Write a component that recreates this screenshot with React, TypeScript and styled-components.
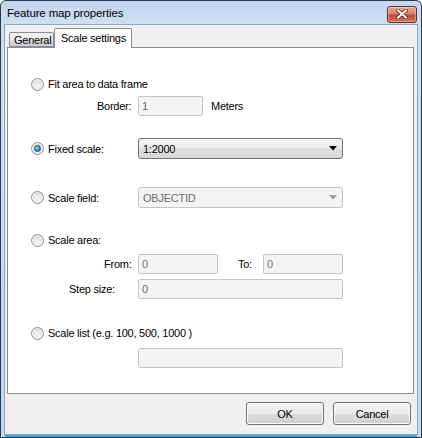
import React from 'react';
import styled, { createGlobalStyle } from 'styled-components';

const GlobalStyle = createGlobalStyle`
  html, body {
    margin: 0;
    padding: 0;
    background: #ffffff;
  }
  body {
    font-family: "Liberation Sans", Arial, sans-serif;
    font-size: 11px;
    letter-spacing: -0.25px;
    color: #000;
  }
`;

const Window = styled.div`
  width: 420px;
  height: 436px;
  border: 1px solid #2a3a4c;
  border-radius: 6px 6px 0 0;
  background: linear-gradient(180deg, #c3d6ee 0px, #cfdff2 24px, #c6d9ef 100%);
  display: flex;
  flex-direction: column;
  overflow: hidden;
`;

const TitleBar = styled.div`
  height: 23px;
  display: flex;
  align-items: center;
  justify-content: space-between;
  padding: 0 4px 0 6px;
`;

const Title = styled.span`
  font-size: 11.5px;
  letter-spacing: -0.15px;
  color: #000;
  padding-top: 1px;
`;

const CloseButton = styled.div`
  width: 28px;
  height: 15px;
  border: 1px solid #6b2a22;
  border-radius: 3px;
  background: linear-gradient(180deg, #e9a99c 0%, #d9826f 45%, #c24b33 55%, #d0735c 100%);
  box-shadow: inset 0 0 0 1px rgba(255, 255, 255, 0.35);
  display: flex;
  align-items: center;
  justify-content: center;
  margin-top: 3px;
`;

const Client = styled.div`
  flex: 1;
  margin: 0 3px 2px 3px;
  border: 1px solid #8ea4bf;
  background: #f0f0f0;
  display: flex;
  flex-direction: column;
  padding: 3px 3px 9px 2px;
  box-shadow: 0 3px 0 -1px #38acd6;
`;

const TabControl = styled.div`
  display: flex;
  flex-direction: column;
`;

const TabStrip = styled.div`
  height: 19px;
  display: flex;
  align-items: flex-end;
  position: relative;
  z-index: 1;
`;

const Tab = styled.div<{ $active?: boolean; $width: number }>`
  box-sizing: border-box;
  width: ${p => p.$width}px;
  height: ${p => (p.$active ? 20 : 15)}px;
  margin-left: ${p => (p.$active ? 0 : 2)}px;
  margin-bottom: ${p => (p.$active ? -1 : 0)}px;
  border: 1px solid #898c95;
  border-bottom: ${p => (p.$active ? 'none' : '1px solid #898c95')};
  border-radius: 2px 2px 0 0;
  background: ${p =>
    p.$active
      ? '#ffffff'
      : 'linear-gradient(180deg, #f2f2f2 0%, #ebebeb 50%, #dddddd 51%, #cfcfcf 100%)'};
  display: flex;
  align-items: ${p => (p.$active ? 'flex-start' : 'center')};
  padding: ${p => (p.$active ? '3px 0 0 6px' : '1px 0 0 4px')};
  white-space: nowrap;
  color: #000;
`;

const Panel = styled.div`
  box-sizing: border-box;
  height: 347px;
  border: 1px solid #898c95;
  background: #ffffff;
  display: flex;
  flex-direction: column;
`;

const Row = styled.div<{ $top: number; $h?: number }>`
  display: flex;
  align-items: center;
  height: ${p => p.$h ?? 20}px;
  margin-top: ${p => p.$top}px;
  padding-left: 23px;
`;

const OptionLabel = styled.label<{ $width?: number }>`
  display: flex;
  align-items: center;
  gap: 4px;
  width: ${p => (p.$width ? `${p.$width}px` : 'auto')};
  flex-shrink: 0;
  white-space: nowrap;
`;

const Radio = styled.span<{ $checked?: boolean }>`
  box-sizing: border-box;
  width: 13px;
  height: 13px;
  border-radius: 50%;
  border: 1px solid #8e8f8f;
  background: radial-gradient(circle at 50% 65%, #f8f8f8 0%, #e6e6e6 45%, #cfcfcf 100%);
  box-shadow: inset 0 0 0 1px #f4f4f4;
  display: flex;
  align-items: center;
  justify-content: center;
  flex-shrink: 0;

  &::after {
    content: '';
    display: ${p => (p.$checked ? 'block' : 'none')};
    width: 5px;
    height: 5px;
    border-radius: 50%;
    border: 1px solid #1c4f7c;
    background: radial-gradient(circle at 40% 35%, #9fe0ff 0%, #2e8fd0 55%, #0c4a82 100%);
  }
`;

const FieldLabel = styled.span<{ $indent: number; $width: number }>`
  box-sizing: border-box;
  width: ${p => p.$width}px;
  padding-left: ${p => p.$indent}px;
  flex-shrink: 0;
  white-space: nowrap;
`;

const TextBox = styled.div<{ $width: number }>`
  box-sizing: border-box;
  width: ${p => p.$width}px;
  height: 20px;
  border: 1px solid #c2c5c9;
  border-radius: 2px;
  background: #f4f4f4;
  color: #6d6d6d;
  display: flex;
  align-items: center;
  padding-left: 3px;
  flex-shrink: 0;
`;

const Unit = styled.span`
  margin-left: 8px;
`;

const Combo = styled.div<{ $disabled?: boolean }>`
  box-sizing: border-box;
  width: 205px;
  height: 21px;
  border: 1px solid ${p => (p.$disabled ? '#c2c5c9' : '#707070')};
  border-radius: 3px;
  background: ${p =>
    p.$disabled
      ? '#f4f4f4'
      : 'linear-gradient(180deg, #f4f4f4 0%, #ececec 45%, #dedede 55%, #d7d7d7 100%)'};
  color: ${p => (p.$disabled ? '#6d6d6d' : '#000')};
  display: flex;
  align-items: center;
  justify-content: space-between;
  padding: 0 5px 0 4px;
  flex-shrink: 0;
`;

const ButtonRow = styled.div`
  display: flex;
  justify-content: flex-end;
  gap: 9px;
  margin-top: 8px;
  padding-right: 3px;
`;

const Button = styled.button`
  box-sizing: border-box;
  width: 78px;
  height: 23px;
  border: 1px solid #707070;
  border-radius: 3px;
  background: linear-gradient(180deg, #f2f2f2 0%, #ebebeb 50%, #dddddd 51%, #cfcfcf 100%);
  box-shadow: inset 0 0 0 1px #fcfcfc;
  font-family: "Liberation Sans", Arial, sans-serif;
  font-size: 11px;
  letter-spacing: -0.25px;
  color: #000;
  padding: 0;
`;

const Arrow = ({ color }: { color: string }) => (
  <svg width="8" height="5" viewBox="0 0 8 5">
    <polygon points="0,0 8,0 4,4.5" fill={color} />
  </svg>
);

const CloseGlyph = () => (
  <svg width="12" height="10" viewBox="0 0 12 10">
    <path d="M2 1.5 L10 8.5 M10 1.5 L2 8.5" stroke="#5a2018" strokeWidth="3.6" strokeLinecap="square" />
    <path d="M2 1.5 L10 8.5 M10 1.5 L2 8.5" stroke="#ffffff" strokeWidth="2" strokeLinecap="square" />
  </svg>
);

const Option = ({ text, checked, width }: { text: string; checked?: boolean; width?: number }) => (
  <OptionLabel $width={width}>
    <Radio $checked={checked} />
    <span>{text}</span>
  </OptionLabel>
);

export default function App() {
  return (
    <>
      <GlobalStyle />
      <Window>
        <TitleBar>
          <Title>Feature map properties</Title>
          <CloseButton>
            <CloseGlyph />
          </CloseButton>
        </TitleBar>
        <Client>
          <TabControl>
            <TabStrip>
              <Tab $width={45}>General</Tab>
              <Tab $width={78} $active>Scale settings</Tab>
            </TabStrip>
            <Panel>
              <Row $top={26}>
                <Option text="Fit area to data frame" />
              </Row>
              <Row $top={2}>
                <FieldLabel $indent={66} $width={107}>Border:</FieldLabel>
                <TextBox $width={65}>1</TextBox>
                <Unit>Meters</Unit>
              </Row>
              <Row $top={22} $h={21}>
                <Option text="Fixed scale:" checked width={107} />
                <Combo>
                  <span>1:2000</span>
                  <Arrow color="#000" />
                </Combo>
              </Row>
              <Row $top={28} $h={21}>
                <Option text="Scale field:" width={107} />
                <Combo $disabled>
                  <span>OBJECTID</span>
                  <Arrow color="#a0a0a0" />
                </Combo>
              </Row>
              <Row $top={22}>
                <Option text="Scale area:" />
              </Row>
              <Row $top={4}>
                <FieldLabel $indent={73} $width={107}>From:</FieldLabel>
                <TextBox $width={80}>0</TextBox>
                <FieldLabel $indent={20} $width={45}>To:</FieldLabel>
                <TextBox $width={80}>0</TextBox>
              </Row>
              <Row $top={5}>
                <FieldLabel $indent={38} $width={107}>Step size:</FieldLabel>
                <TextBox $width={205}>0</TextBox>
              </Row>
              <Row $top={24}>
                <Option text="Scale list (e.g. 100, 500, 1000 )" />
              </Row>
              <Row $top={5}>
                <FieldLabel $indent={0} $width={107} />
                <TextBox $width={205} />
              </Row>
            </Panel>
          </TabControl>
          <ButtonRow>
            <Button>OK</Button>
            <Button>Cancel</Button>
          </ButtonRow>
        </Client>
      </Window>
    </>
  );
}
